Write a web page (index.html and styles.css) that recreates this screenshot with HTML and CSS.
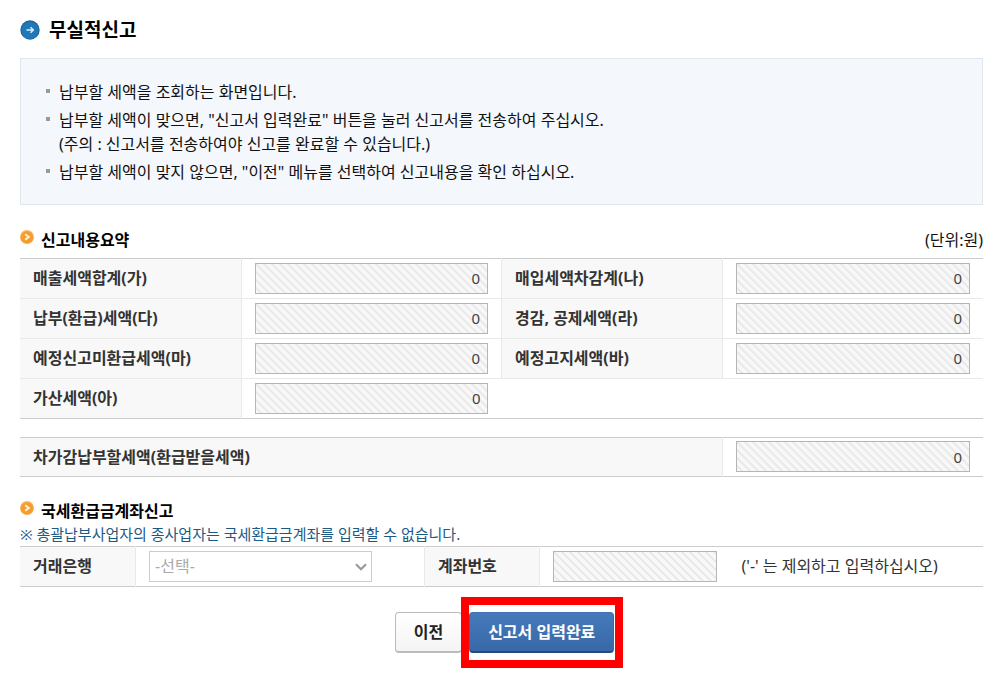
FILE: index.html
```html
<!DOCTYPE html>
<html lang="ko">
<head>
<meta charset="utf-8">
<meta name="viewport" content="width=device-width, initial-scale=1">
<title>무실적신고</title>
<link rel="stylesheet" href="styles.css">
</head>
<body>
<main class="page">
  <h1 class="page-title">
    <svg class="page-icon" viewBox="0 0 20 20" aria-hidden="true">
      <circle cx="10" cy="10" r="9.7" fill="#1b65a0"/>
      <circle cx="10" cy="10.3" r="8.6" fill="#2178b8"/>
      <path d="M6.5 10h6.5M10.5 7.3l2.8 2.7-2.8 2.7" fill="none" stroke="#d9f1ff" stroke-width="1.5"/>
    </svg>
    무실적신고
  </h1>

  <ul class="notice">
    <li>납부할 세액을 조회하는 화면입니다.</li>
    <li>납부할 세액이 맞으면, "신고서 입력완료" 버튼을 눌러 신고서를 전송하여 주십시오.<br>(주의 : 신고서를 전송하여야 신고를 완료할 수 있습니다.)</li>
    <li>납부할 세액이 맞지 않으면, "이전" 메뉴를 선택하여 신고내용을 확인 하십시오.</li>
  </ul>

  <form>
    <section class="summary">
      <div class="section-head">
        <h2 class="section-title">
          <svg class="section-icon" viewBox="0 0 14 14" aria-hidden="true">
            <circle cx="7" cy="7" r="7" fill="#f9b860"/>
            <circle cx="7" cy="7.4" r="6.2" fill="#f59c30"/>
            <path d="M5.2 4.2L8.8 7l-3.6 2.8" fill="none" stroke="#fff3dc" stroke-width="1.9"/>
          </svg>
          신고내용요약
        </h2>
        <span class="unit">(단위:원)</span>
      </div>
      <table class="grid">
        <colgroup><col class="label-col"><col class="value-col"><col class="label-col"><col class="value-col"></colgroup>
        <tr>
          <th scope="row"><label for="sales">매출세액합계(가)</label></th>
          <td><input class="field" id="sales" type="text" value="0" readonly></td>
          <th scope="row"><label for="purchase">매입세액차감계(나)</label></th>
          <td><input class="field" id="purchase" type="text" value="0" readonly></td>
        </tr>
        <tr>
          <th scope="row"><label for="payable">납부(환급)세액(다)</label></th>
          <td><input class="field" id="payable" type="text" value="0" readonly></td>
          <th scope="row"><label for="deduction">경감, 공제세액(라)</label></th>
          <td><input class="field" id="deduction" type="text" value="0" readonly></td>
        </tr>
        <tr>
          <th scope="row"><label for="unrefunded">예정신고미환급세액(마)</label></th>
          <td><input class="field" id="unrefunded" type="text" value="0" readonly></td>
          <th scope="row"><label for="notified">예정고지세액(바)</label></th>
          <td><input class="field" id="notified" type="text" value="0" readonly></td>
        </tr>
        <tr>
          <th scope="row"><label for="penalty">가산세액(아)</label></th>
          <td><input class="field" id="penalty" type="text" value="0" readonly></td>
          <td colspan="2"></td>
        </tr>
      </table>
      <table class="grid total">
        <colgroup><col class="total-col"><col class="value-col"></colgroup>
        <tr>
          <th scope="row"><label for="total">차가감납부할세액(환급받을세액)</label></th>
          <td><input class="field" id="total" type="text" value="0" readonly></td>
        </tr>
      </table>
    </section>

    <section class="account">
      <h2 class="section-title">
        <svg class="section-icon" viewBox="0 0 14 14" aria-hidden="true">
          <circle cx="7" cy="7" r="7" fill="#f9b860"/>
          <circle cx="7" cy="7.4" r="6.2" fill="#f59c30"/>
          <path d="M5.2 4.2L8.8 7l-3.6 2.8" fill="none" stroke="#fff3dc" stroke-width="1.9"/>
        </svg>
        국세환급금계좌신고
      </h2>
      <p class="remark">※ 총괄납부사업자의 종사업자는 국세환급금계좌를 입력할 수 없습니다.</p>
      <table class="grid">
        <colgroup><col class="short-col"><col class="bank-col"><col class="short-col"><col></colgroup>
        <tr>
          <th scope="row"><label for="bank">거래은행</label></th>
          <td>
            <div class="select-wrap">
              <select class="select" id="bank" disabled><option>-선택-</option></select>
              <svg class="chevron" viewBox="0 0 12 8" aria-hidden="true"><path d="M1 1.2l5 5 5-5" fill="none" stroke="#999" stroke-width="2.2"/></svg>
            </div>
          </td>
          <th scope="row"><label for="account">계좌번호</label></th>
          <td>
            <div class="account-cell">
              <input class="field account-field" id="account" type="text" readonly>
              <span>('-' 는 제외하고 입력하십시오)</span>
            </div>
          </td>
        </tr>
      </table>
    </section>

    <div class="actions">
      <button class="btn" type="button">이전</button>
      <span class="highlight"><button class="btn primary" type="button">신고서 입력완료</button></span>
    </div>
  </form>
</main>
</body>
</html>
```
FILE: styles.css
```css
* {
  box-sizing: border-box;
}

body {
  margin: 0;
  background: #fff;
  color: #111;
  font: 16px/24px "Noto Sans", "Noto Sans CJK KR", sans-serif;
}

.page {
  padding: 16px 16px 20px 20px;
}

h1, h2, p {
  margin: 0;
}

.page-title {
  display: flex;
  align-items: center;
  gap: 9px;
  font-size: 19px;
  line-height: 28px;
  color: #000;
}

.page-icon {
  width: 20px;
  height: 20px;
}

.notice {
  margin: 14px 0 0;
  padding: 21px 38px 20px;
  list-style: none;
  background: #f4f7fc;
  border: 1px solid #dfe6ec;
}

.notice li {
  position: relative;
}

.notice li + li {
  margin-top: 4px;
}

.notice li::before {
  content: "";
  position: absolute;
  left: -13px;
  top: 9px;
  width: 4px;
  height: 4px;
  background: #999;
}

.summary {
  margin-top: 23px;
}

.section-head {
  display: flex;
  justify-content: space-between;
  align-items: center;
  padding-bottom: 6px;
}

.section-title {
  display: flex;
  gap: 7px;
  font-size: 16px;
  line-height: 24px;
  color: #000;
}

.section-icon {
  width: 14px;
  height: 14px;
  margin-top: 2px;
}

.grid {
  width: 100%;
  table-layout: fixed;
  border-collapse: collapse;
  border-top: 1px solid #ccc;
  border-bottom: 1px solid #ccc;
  color: #333;
}

.label-col { width: 23%; }
.value-col { width: 27%; }
.total-col { width: 73%; }
.short-col { width: 12%; }
.bank-col { width: 30%; }

.grid th,
.grid td {
  height: 40px;
  padding: 3px 13px 4px;
}

.grid th {
  text-align: left;
  background: #f8f8f8;
  border-right: 1px solid #e9e9e9;
}

.grid td + th {
  border-left: 1px solid #e9e9e9;
}

.grid tr + tr > * {
  border-top: 1px solid #e9e9e9;
}

.total {
  margin-top: 18px;
}

.total th,
.total td {
  height: 39px;
}

.field {
  display: block;
  width: 100%;
  height: 31px;
  padding: 0 7px;
  border: 1px solid #b5b5b5;
  border-radius: 0;
  background: linear-gradient(45deg, #eaeaea 8%, #f8f8f8 8% 42%, #eaeaea 42% 58%, #f8f8f8 58% 92%, #eaeaea 92%) 0 0 / 8px 8px;
  color: #444;
  font: inherit;
  font-size: 15px;
  text-align: right;
}

.account {
  margin-top: 22px;
}

.remark {
  color: #1c5a86;
  font-size: 15px;
  line-height: 23px;
}

.select-wrap {
  position: relative;
  width: 223px;
}

.select {
  display: block;
  width: 100%;
  height: 31px;
  padding: 0 5px;
  appearance: none;
  border: 1px solid #ccc;
  border-radius: 0;
  background: #fff;
  color: #aaa;
  font: inherit;
  opacity: 1;
}

.chevron {
  position: absolute;
  right: 5px;
  top: 12px;
  width: 12px;
  height: 8px;
  pointer-events: none;
}

.account-cell {
  display: flex;
  align-items: center;
  gap: 24px;
  white-space: nowrap;
}

.account-field {
  width: 164px;
}

.actions {
  display: flex;
  justify-content: center;
  gap: 7px;
  margin: 25px 0 0 6px;
}

.btn {
  height: 41px;
  padding: 0 18px;
  border: 1px solid #bbb;
  border-bottom: 2px solid #bbb;
  border-radius: 4px;
  background: linear-gradient(#fff, #f4f4f4);
  color: #222;
  font: inherit;
  font-weight: bold;
}

.primary {
  border-color: #4072b0 #3a6aa5 #254a7c;
  background: linear-gradient(#457abb, #3868a6);
  color: #fff;
}

.highlight {
  position: relative;
}

.highlight::after {
  content: "";
  position: absolute;
  inset: -15px -9px -15px -8px;
  border: 8px solid #fe0000;
  pointer-events: none;
}
```
